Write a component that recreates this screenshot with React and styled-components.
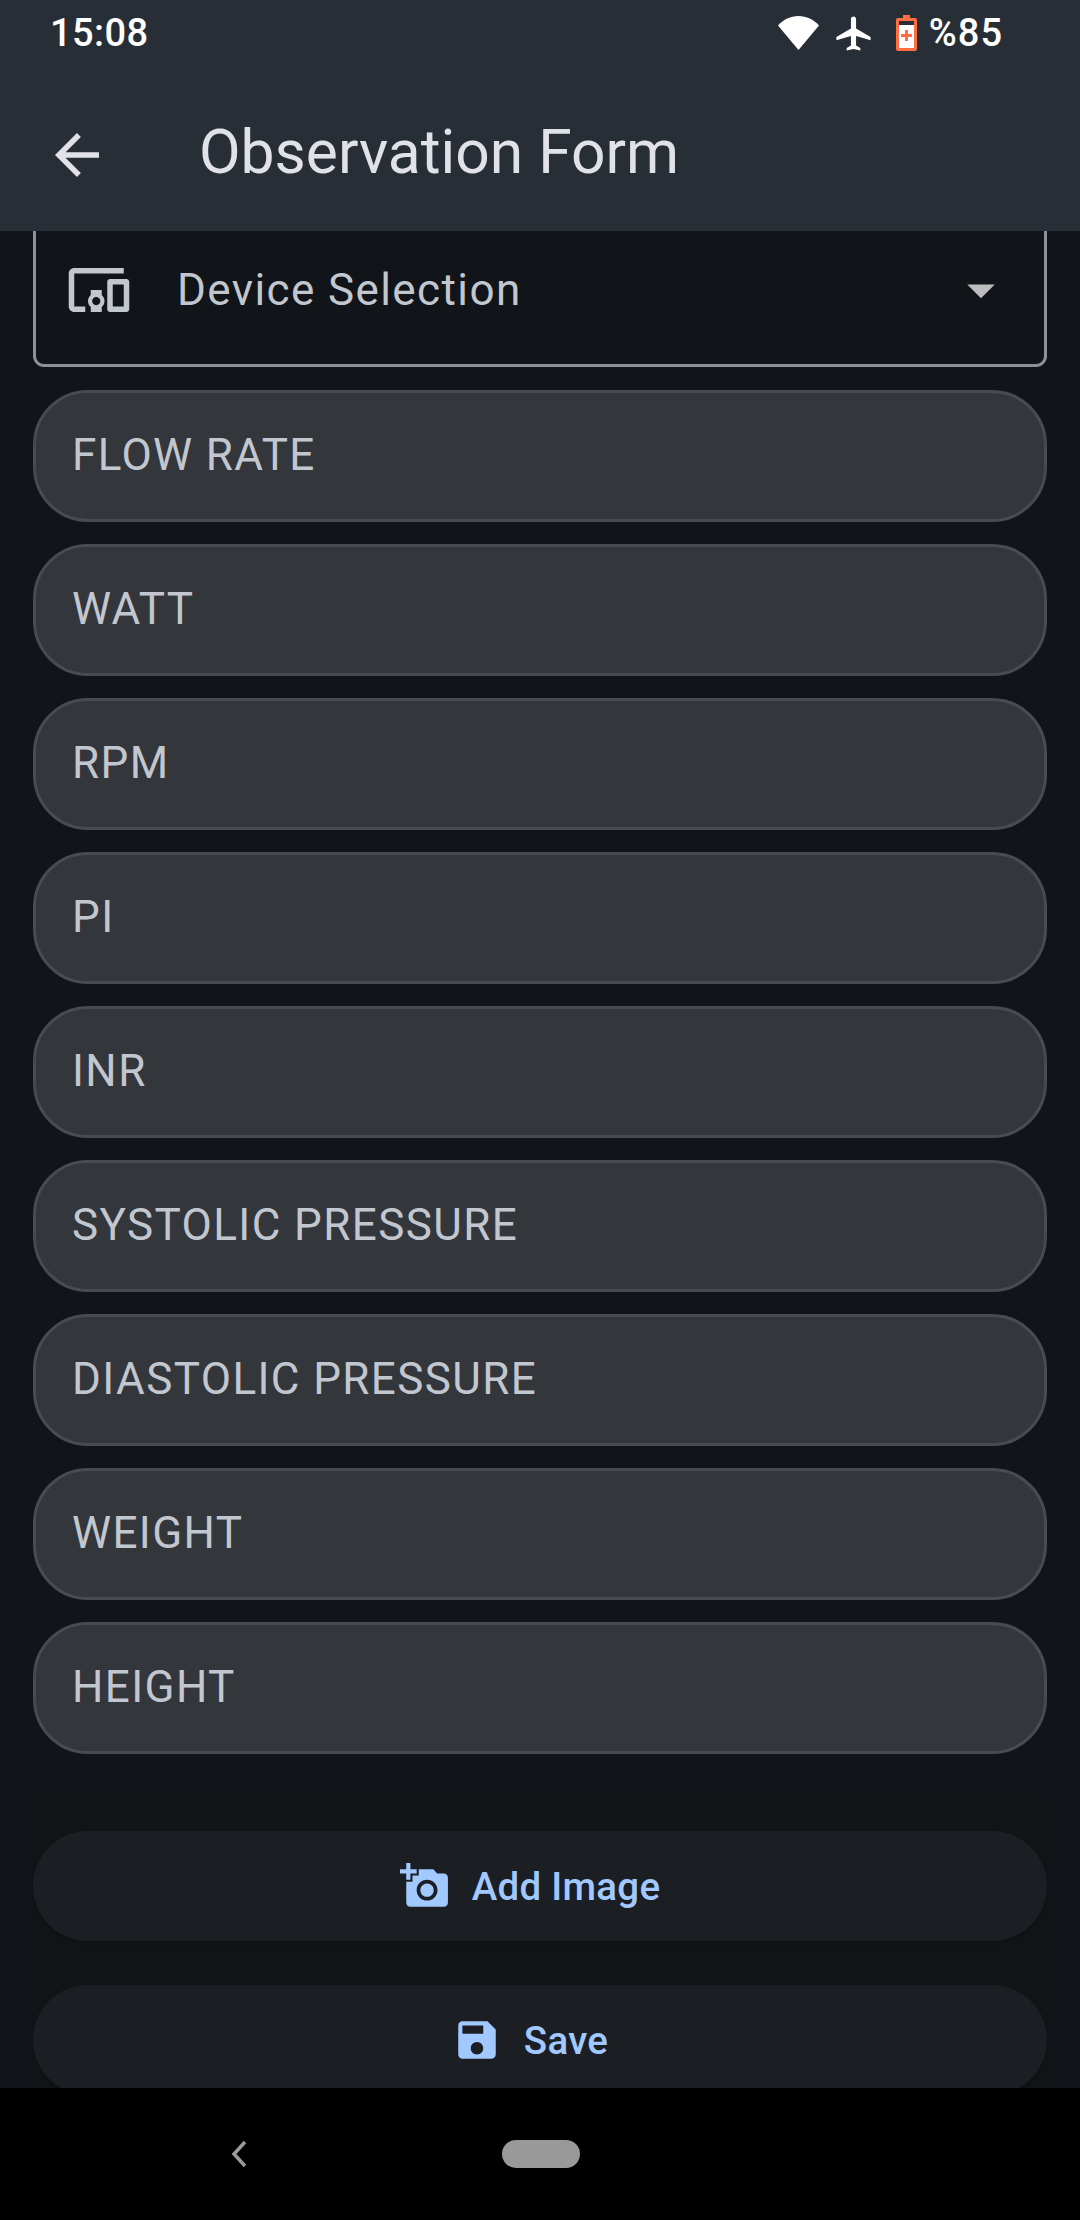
import React from "react";
import styled, { createGlobalStyle } from "styled-components";
import { MdArrowBack, MdArrowDropDown, MdDevicesOther, MdAddAPhoto, MdSave, MdAirplanemodeActive } from "react-icons/md";

const Global = createGlobalStyle`
  html, body { margin: 0; padding: 0; background: #111418; }
  * { box-sizing: border-box; }
`;

const Page = styled.div`
  width: 1080px;
  height: 2220px;
  display: flex;
  flex-direction: column;
  overflow: hidden;
  background: #111418;
  font-family: Roboto, "Noto Sans", sans-serif;
`;

const Header = styled.header`
  position: relative;
  z-index: 1;
  height: 231px;
  flex: none;
  background: #282e36;
`;

const StatusBar = styled.div`
  height: 66px;
  padding: 0 77px 0 50px;
  display: flex;
  align-items: center;
  justify-content: space-between;
  color: #fff;
  font-size: 38px;
  font-weight: 500;
  letter-spacing: 0.4px;
`;

const StatusIcons = styled.div`
  display: flex;
  align-items: center;
`;

const WifiIcon = styled.svg`
  margin-right: 14px;
`;

const BatteryIcon = styled.svg`
  margin-left: 22px;
`;

const Percent = styled.span`
  margin-left: 12px;
  letter-spacing: 1px;
`;

const Toolbar = styled.div`
  height: 165px;
  padding: 12px 0 0 44px;
  display: flex;
  align-items: center;
  color: #e1e2e8;
`;

const Title = styled.h1`
  margin: -2px 0 0 89px;
  font-size: 60.5px;
  font-weight: 400;
  line-height: 1;
`;

const Content = styled.main`
  flex: 1;
  min-height: 0;
  overflow: hidden;
  padding: 0 33px;
  display: flex;
  flex-direction: column;
`;

const Select = styled.div`
  flex: none;
  height: 154px;
  margin-top: -18px;
  margin-bottom: 23px;
  padding: 0 30px;
  display: flex;
  align-items: center;
  border: 3px solid #8c9199;
  border-radius: 11px;
  color: #c2c7cf;
`;

const SelectLabel = styled.span`
  flex: 1;
  margin-left: 45px;
  font-size: 44px;
  letter-spacing: 1.4px;
`;

const DropArrow = styled(MdArrowDropDown)`
  color: #bdbdbd;
`;

const Fields = styled.div`
  flex: none;
  display: flex;
  flex-direction: column;
  gap: 22px;
`;

const Field = styled.div`
  height: 132px;
  padding: 0 36px 2px;
  display: flex;
  align-items: center;
  background: #33363b;
  border: 3px solid #484b51;
  border-radius: 55px;
  color: #c2c7cf;
  font-size: 44px;
  letter-spacing: 1.4px;
`;

const Actions = styled.div`
  flex: none;
  margin-top: 44px;
  padding-top: 33px;
  background: #121418;
  display: flex;
  flex-direction: column;
  gap: 44px;
`;

const ActionButton = styled.button`
  flex: none;
  height: 110px;
  padding: 0 20px 0 0;
  display: flex;
  align-items: center;
  justify-content: center;
  gap: 22px;
  border: 0;
  border-radius: 55px;
  background: #1b1e23;
  box-shadow: 0 3px 8px rgba(0, 0, 0, 0.2);
  color: #a2c9ff;
  font-family: inherit;
  font-size: 38.5px;
  font-weight: 500;
  letter-spacing: 0.28px;
`;

const NavBar = styled.nav`
  position: relative;
  z-index: 1;
  flex: none;
  height: 132px;
  background: #000;
  display: flex;
  align-items: center;
  justify-content: center;
`;

const BackChevron = styled.svg`
  position: absolute;
  left: 230px;
  top: 52px;
`;

const HomePill = styled.div`
  width: 78px;
  height: 28px;
  margin-left: 1px;
  border-radius: 14px;
  background: #999;
`;

const Wifi = () => (
  <WifiIcon width="41" height="34" viewBox="0 0 41 34">
    <path d="M20.5 34 0 9.5C5.5 3.5 12.5 0 20.5 0S35.5 3.5 41 9.5z" fill="#fff" />
  </WifiIcon>
);

const Battery = () => (
  <BatteryIcon width="21" height="36" viewBox="0 0 21 36">
    <path d="M7 0h7v3h5a2 2 0 0 1 2 2v29a2 2 0 0 1-2 2H2a2 2 0 0 1-2-2V5a2 2 0 0 1 2-2h5z" fill="#ff6e40" />
    <rect x="3" y="6" width="15" height="27" fill="#fff" />
    <rect x="3" y="6" width="15" height="4" fill="#282e36" />
    <path d="M9 15h3v4h4v3h-4v4H9v-4H5v-3h4z" fill="#ff6e40" />
  </BatteryIcon>
);

const labels = ["FLOW RATE", "WATT", "RPM", "PI", "INR", "SYSTOLIC PRESSURE", "DIASTOLIC PRESSURE", "WEIGHT", "HEIGHT"];

export default function App() {
  return (
    <Page>
      <Global />
      <Header>
        <StatusBar>
          <span>15:08</span>
          <StatusIcons>
            <Wifi />
            <MdAirplanemodeActive size={41} />
            <Battery />
            <Percent>%85</Percent>
          </StatusIcons>
        </StatusBar>
        <Toolbar>
          <MdArrowBack size={66} />
          <Title>Observation Form</Title>
        </Toolbar>
      </Header>
      <Content>
        <Select>
          <MdDevicesOther size={66} />
          <SelectLabel>Device Selection</SelectLabel>
          <DropArrow size={66} />
        </Select>
        <Fields>
          {labels.map((label) => (
            <Field key={label}>{label}</Field>
          ))}
        </Fields>
        <Actions>
          <ActionButton>
            <MdAddAPhoto size={50} />
            Add Image
          </ActionButton>
          <ActionButton>
            <MdSave size={50} />
            Save
          </ActionButton>
        </Actions>
      </Content>
      <NavBar>
        <BackChevron width="18" height="28" viewBox="0 0 18 28">
          <path d="M15 2 4 14l11 12" fill="none" stroke="#999" strokeWidth="3.5" />
        </BackChevron>
        <HomePill />
      </NavBar>
    </Page>
  );
}
